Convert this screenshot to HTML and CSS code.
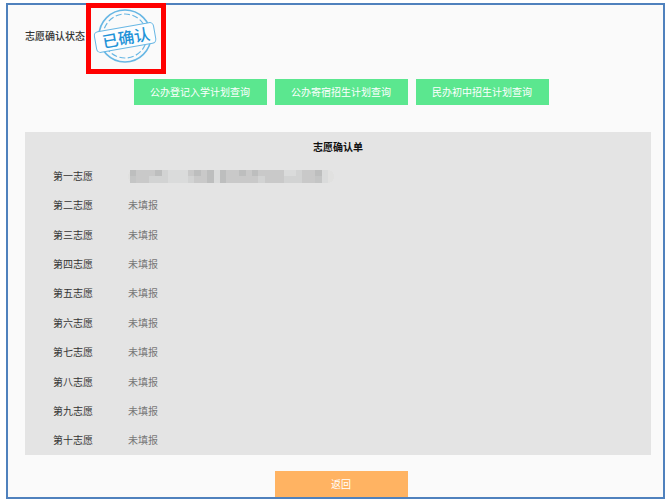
FILE: index.html
```
<!DOCTYPE html>
<html lang="zh-CN">
	<head>
		<meta charset="utf-8">
		<title>志愿确认</title>
		<link rel="stylesheet" href="styles.css">
	</head>
	<body>
		<main class="page">
			<div class="status">
				<span class="status-label">志愿确认状态</span>
				<div class="stamp">
					<svg width="70" height="61" viewBox="0 0 70 61" role="img" aria-label="已确认">
						<g fill="none" stroke="#68b7e4">
							<circle cx="34" cy="28" r="26" stroke-width="1.6"/>
							<circle cx="34" cy="28" r="22" stroke-width="1.2" stroke-dasharray="6 2.5"/>
						</g>
						<g transform="rotate(-10 34 29)">
							<rect x="4" y="19" width="60" height="21" rx="4" fill="#fcfdfe" stroke="#68b7e4"/>
							<text x="35" y="36" text-anchor="middle" class="stamp-text">已确认</text>
						</g>
					</svg>
				</div>
			</div>
			<div class="actions">
				<button type="button" class="button">公办登记入学计划查询</button>
				<button type="button" class="button">公办寄宿招生计划查询</button>
				<button type="button" class="button">民办初中招生计划查询</button>
			</div>
			<table class="choices">
				<tbody>
					<tr><th colspan="2" class="title">志愿确认单</th></tr>
					<tr>
						<th scope="row">第一志愿</th>
						<td>
							<!-- school name is masked -->
							<svg class="mask" width="206" height="13" viewBox="0 0 206 13" shape-rendering="crispEdges" aria-hidden="true">
								<rect width="206" height="13" rx="6" fill="#e1e1e0"/>
								<rect x="2" width="198" height="13" fill="#d2d3d3"/>
								<g fill="#c9c9c9">
									<rect x="8" width="26" height="6"/>
									<rect x="8" y="6" width="13" height="7"/>
									<rect x="60" width="19" height="6"/>
									<rect x="66" y="6" width="13" height="7"/>
									<rect x="98" width="58" height="6"/>
									<rect x="92" y="6" width="38" height="7"/>
									<rect x="137" y="6" width="19" height="7"/>
									<rect x="174" width="13" height="13"/>
								</g>
								<g fill="#dadbdb">
									<rect x="40" width="20" height="13"/>
									<rect x="86" width="6" height="13"/>
									<rect x="156" width="12" height="6"/>
									<rect x="194" width="6" height="13"/>
								</g>
								<g fill="#bdbebe">
									<rect x="2" width="6" height="6"/>
									<rect x="27" width="7" height="6"/>
									<rect x="66" width="7" height="6"/>
									<rect x="79" width="7" height="13"/>
									<rect x="92" width="6" height="13"/>
									<rect x="111" width="7" height="6"/>
									<rect x="124" width="6" height="6"/>
									<rect x="187" width="7" height="6"/>
								</g>
								<g fill="#c4c5c5">
									<rect x="2" y="6" width="6" height="7"/>
									<rect x="187" y="6" width="7" height="7"/>
								</g>
							</svg>
						</td>
					</tr>
					<tr><th scope="row">第二志愿</th><td>未填报</td></tr>
					<tr><th scope="row">第三志愿</th><td>未填报</td></tr>
					<tr><th scope="row">第四志愿</th><td>未填报</td></tr>
					<tr><th scope="row">第五志愿</th><td>未填报</td></tr>
					<tr><th scope="row">第六志愿</th><td>未填报</td></tr>
					<tr><th scope="row">第七志愿</th><td>未填报</td></tr>
					<tr><th scope="row">第八志愿</th><td>未填报</td></tr>
					<tr><th scope="row">第九志愿</th><td>未填报</td></tr>
					<tr><th scope="row">第十志愿</th><td>未填报</td></tr>
				</tbody>
			</table>
			<div class="actions">
				<button type="button" class="button back">返回</button>
			</div>
		</main>
	</body>
</html>
```
FILE: styles.css
```
body {
	margin: 0;
	padding: 3px 3px 3px 6px;
	background-color: white;
	font-family: "Noto Sans CJK SC", sans-serif;
	font-size: 10px;
	line-height: 16px;
	color: #333;
}
.page {
	padding: 0 12px 0 17px;
	border: 2px solid #4f81bd;
	background-color: #fafafa;
}
.status {
	display: flex;
	align-items: center;
	gap: 1px;
	margin-top: -2px;
}
.status-label {
	padding-bottom: 6px;
	font-weight: 500;
}
.stamp {
	border: 5px solid red;
	background-color: #fafafa;
}
.stamp svg {
	display: block;
}
.stamp-text {
	fill: #1f93d8;
	font-size: 16px;
	font-weight: 500;
}
.actions {
	display: flex;
	justify-content: center;
	gap: 8px;
	padding: 5px 0 0 6px;
}
.button {
	width: 133px;
	height: 26px;
	padding: 0;
	border: 0;
	background-color: #5be78f;
	color: white;
	font: inherit;
}
.choices {
	width: 100%;
	height: 323px;
	margin: 27px 0 11px;
	border-collapse: collapse;
	background-color: #e4e4e4;
}
.choices th,
.choices td {
	padding: 0;
	text-align: left;
}
.choices th {
	width: 75px;
	padding-left: 28px;
	font-weight: 400;
}
.choices td {
	color: #777;
}
.choices .title {
	padding: 0;
	font-weight: 700;
	color: #111;
	text-align: center;
}
.mask {
	display: block;
}
.back {
	background-color: #ffb362;
}
```
